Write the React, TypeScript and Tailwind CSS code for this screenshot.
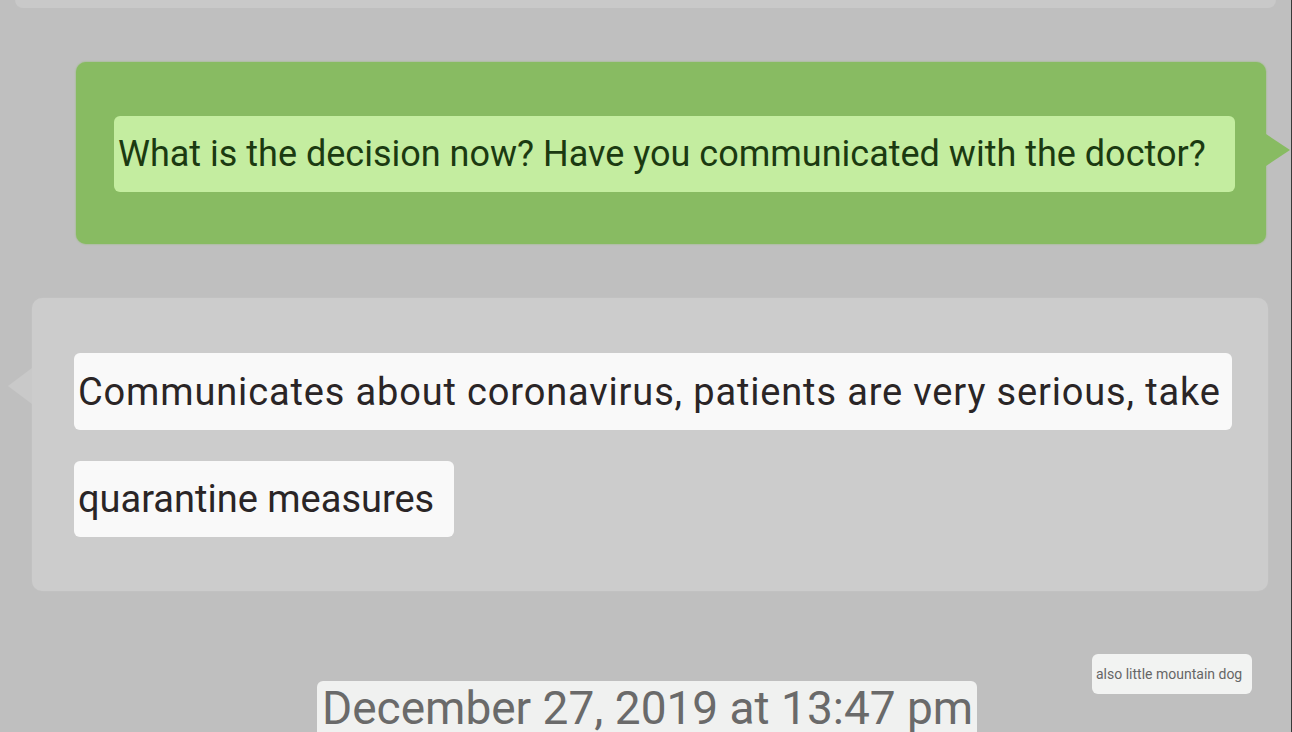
import React from "react";

export default function App() {
  const font = { fontFamily: "Roboto, 'Noto Sans', sans-serif" };
  return (
    <div
      className="relative w-[1292px] h-[732px] overflow-hidden bg-[#bfbfbf] border-r border-[#3a3a3a] flex flex-col"
      style={font}
    >
      {/* top cut-off bubble */}
      <div className="mx-[15px] h-[8px] bg-[#c9c9c9] rounded-b-[10px] shrink-0" />

      {/* green outgoing bubble */}
      <div className="relative ml-[76px] mt-[54px] w-[1190px] h-[182px] shrink-0 rounded-[10px] bg-[#88bb62] pl-[38px] pt-[54px] shadow-[0_0_2px_#88bb62]">
        <div className="absolute right-[-24px] top-[72px] w-0 h-0 border-y-[16px] border-y-transparent border-l-[24px] border-l-[#88bb62]" />
        <div className="flex items-center h-[76px] w-[1121px] rounded-[6px] bg-[#c4eda0] pl-[4px]">
          <span className="text-[36px] leading-none text-[#1b3a11] whitespace-nowrap">
            What is the decision now? Have you communicated with the doctor?
          </span>
        </div>
      </div>

      {/* gray incoming bubble */}
      <div className="relative ml-[32px] mt-[54px] w-[1236px] h-[293px] shrink-0 rounded-[10px] bg-[#cccccc] pl-[42px] pt-[55px] flex flex-col items-start gap-[31px] shadow-[0_0_2px_#c4c4c4]">
        <div className="absolute left-[-24px] top-[70px] w-0 h-0 border-y-[18px] border-y-transparent border-r-[24px] border-r-[#c9c9c9]" />
        <div className="flex items-center h-[77px] w-[1158px] rounded-[6px] bg-[#f9f9f9] pl-[4px]">
          <span className="text-[38px] leading-none text-[#2a2526] whitespace-nowrap tracking-[0.85px]">
            Communicates about coronavirus, patients are very serious, take
          </span>
        </div>
        <div className="flex items-center h-[76px] w-[380px] rounded-[6px] bg-[#f9f9f9] pl-[4px]">
          <span className="text-[38px] leading-none text-[#2a2526] whitespace-nowrap">
            quarantine measures
          </span>
        </div>
      </div>

      {/* bottom row */}
      <div className="flex items-start shrink-0">
        <div className="ml-[317px] mt-[90px] w-[660px] h-[60px] rounded-[6px] bg-[#f0f1f0] flex items-start pl-[5px] pt-[2px] overflow-hidden">
          <span className="text-[46px] leading-[50px] text-[#6a6a6a] whitespace-nowrap">
            December 27, 2019 at 13:47 pm
          </span>
        </div>
        <div className="ml-[115px] mt-[63px] w-[160px] h-[40px] rounded-[6px] bg-[#f2f3f2] flex items-center pl-[4px]">
          <span className="text-[14px] leading-none text-[#666666] whitespace-nowrap">
            also little mountain dog
          </span>
        </div>
      </div>
    </div>
  );
}
